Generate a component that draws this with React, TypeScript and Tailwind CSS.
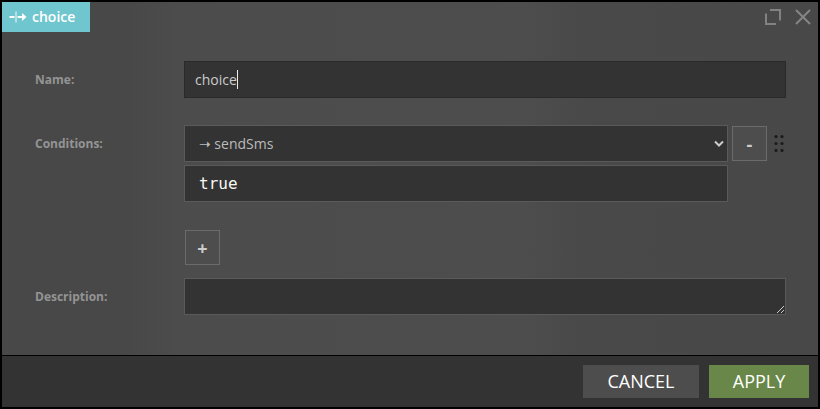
import type { ReactNode } from "react";

function Label({ children }: { children: ReactNode }) {
  return (
    <div className="w-[149px] shrink-0 pt-[10px] text-xs leading-[18px] font-bold text-[#949494]">
      {children}
    </div>
  );
}

function SquareButton({ children, className }: { children: ReactNode; className: string }) {
  return (
    <button
      className={`flex size-[35px] shrink-0 items-center justify-center border border-[#6b6b6b] bg-[#4d4d4d] text-lg leading-none font-bold text-[#cccccc] ${className}`}
    >
      {children}
    </button>
  );
}

function FlowIcon() {
  return (
    <svg width="18" height="14" viewBox="0 0 18 14" className="shrink-0">
      <path d="M0.5 7H5.5M8.5 7H14" stroke="#fff" strokeWidth="2" fill="none" />
      <path d="M13 3L17.5 7L13 11Z" fill="#fff" />
      <path d="M7 1.5V12.5" stroke="#c9eaed" strokeWidth="1.5" />
    </svg>
  );
}

function Header() {
  return (
    <header className="flex h-[30px] items-start justify-between">
      <div className="flex h-[30px] w-[88px] items-center bg-[#70c6ce] pl-[7px] text-sm font-semibold text-white">
        <FlowIcon />
        <span className="ml-[5px] leading-none">choice</span>
      </div>
      <div className="flex items-center gap-[14px] pt-[7px] pr-[7px]">
        <svg width="16" height="16" viewBox="0 0 16 16" fill="none" stroke="#828282" strokeWidth="2">
          <path d="M5 1H15V11.5M1 4.5V15H11" />
        </svg>
        <svg width="16" height="16" viewBox="0 0 16 16" fill="none" stroke="#858585" strokeWidth="2">
          <path d="M1 1L15 15M15 1L1 15" />
        </svg>
      </div>
    </header>
  );
}

function DragHandle() {
  return (
    <svg width="10" height="17" viewBox="0 0 10 17" fill="#1b1b1b" className="mt-[10px] ml-[7px] shrink-0">
      {[1.6, 8.5, 15.4].map((y) => (
        <g key={y}>
          <circle cx="2" cy={y} r="1.6" />
          <circle cx="8" cy={y} r="1.6" />
        </g>
      ))}
    </svg>
  );
}

export default function App() {
  return (
    <div className="h-[409px] w-[820px] overflow-hidden border-2 border-black bg-[#333333] font-['Open_Sans','Noto_Sans',sans-serif]">
      <div className="h-[353px] bg-[linear-gradient(90deg,#484848_0%,#484848_15%,#4c4c4c_22%,#4d4d4d_64%,#494949_71%,#484848_100%)]">
        <Header />
        <main className="pl-[33px]">
          <div className="flex pt-[29px]">
            <Label>Name:</Label>
            <div className="flex h-[37px] w-[602px] items-center border border-[#2a2a2a] bg-[#333333] pl-[10px] text-sm text-[#cccccc]">
              <span>choice</span>
              <span className="h-[19px] w-px bg-[#eeeeee]" />
            </div>
          </div>

          <div className="flex pt-[27px]">
            <Label>Conditions:</Label>
            <div>
              <div className="flex">
                <div className="flex h-[37px] w-[544px] items-center border border-[#5a5a5a] bg-[#333333] pr-[3px] pl-[14px] text-sm text-[#bbbbbb]">
                  <span className="flex-1">
                    <span className="font-['DejaVu_Sans']">➝</span> sendSms
                  </span>
                  <svg width="10" height="8" viewBox="0 0 10 8" fill="none" stroke="#cccccc" strokeWidth="2">
                    <path d="M1 1.5L5 5.5L9 1.5" />
                  </svg>
                </div>
                <SquareButton className="mt-px ml-1">-</SquareButton>
                <DragHandle />
              </div>
              <div className="mt-[3px] flex h-[37px] w-[544px] items-center border border-[#5a5a5a] bg-[#333333] pl-[14px] font-['DejaVu_Sans_Mono',monospace] text-base text-[#f8f8f2]">
                true
              </div>
              <SquareButton className="mt-7 ml-px">+</SquareButton>
            </div>
          </div>

          <div className="flex pt-[13px]">
            <Label>Description:</Label>
            <div className="flex h-[37px] w-[602px] items-end justify-end border border-[#5a5a5a] bg-[#333333]">
              <svg width="9" height="9" viewBox="0 0 9 9" stroke="#cccccc" strokeWidth="1">
                <path d="M1 8L8 1M5 8L8 5" />
              </svg>
            </div>
          </div>
        </main>
      </div>
      <footer className="flex h-[52px] justify-end gap-[10px] border-t border-black pt-[9px] pr-[9px] text-lg text-white">
        <button className="h-[33px] w-[116px] bg-[#4d4d4d] leading-[33px]">CANCEL</button>
        <button className="h-[33px] w-[100px] bg-[#688748] leading-[33px]">APPLY</button>
      </footer>
    </div>
  );
}
